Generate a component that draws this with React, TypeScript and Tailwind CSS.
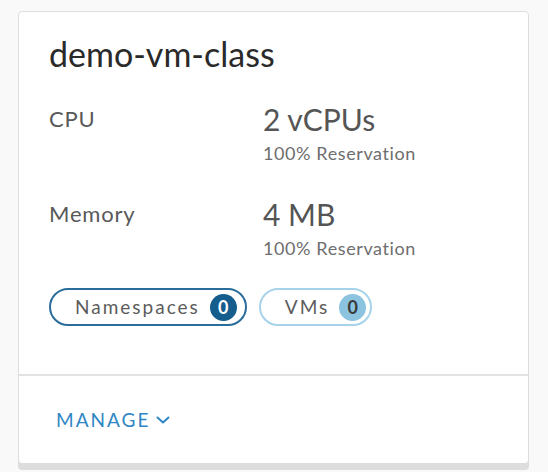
const font = { fontFamily: "Lato, 'Open Sans', sans-serif" };

function Stat({ label, value, note }: { label: string; value: string; note: string }) {
  return (
    <div className="flex">
      <div className="w-[214px] pt-[4px] text-[22px] leading-[28px] tracking-[0.8px] text-[#595959]">
        {label}
      </div>
      <div className="flex flex-col">
        <span className="text-[30px] leading-[36px] text-[#555555]">{value}</span>
        <span className="mt-[5px] text-[18px] leading-[22px] tracking-[0.6px] text-[#6e6e6e]">
          {note}
        </span>
      </div>
    </div>
  );
}

function Chip({ label, count, dark }: { label: string; count: number; dark?: boolean }) {
  return (
    <div
      className={`flex items-center h-[38px] rounded-full border-2 pl-[24px] gap-[10px] ${
        dark ? "border-[#2a6d9b] pr-[8px]" : "border-[#a6d3ea] pr-[4px]"
      }`}
    >
      <span className="text-[19px] tracking-[2px] text-[#5c5c5c]">{label}</span>
      <span
        className={`flex items-center justify-center w-[27px] h-[27px] rounded-full text-[18px] font-bold ${
          dark ? "bg-[#155d8d] text-white" : "bg-[#8cc3df] text-[#3a3a3a]"
        }`}
      >
        {count}
      </span>
    </div>
  );
}

export default function App() {
  return (
    <div className="min-h-[472px] bg-[#f9f9f9] pt-[11px] pl-[18px] pr-[19px]" style={font}>
      <div className="bg-white border border-[#dddddd] rounded-[4px] shadow-[0_6px_0_0_#dddddd]">
        <div className="px-[30px] pt-[22px] h-[362px]">
          <h1 className="text-[34px] leading-[40px] text-[#2a2a2a]">demo-vm-class</h1>
          <div className="mt-[27px] flex flex-col gap-[32px]">
            <Stat label="CPU" value="2 vCPUs" note="100% Reservation" />
            <Stat label="Memory" value="4 MB" note="100% Reservation" />
          </div>
          <div className="mt-[29px] flex gap-[12px]">
            <Chip label="Namespaces" count={0} dark />
            <Chip label="VMs" count={0} />
          </div>
        </div>
        <div className="border-t-2 border-[#e2e2e2] h-[89px] flex items-center px-[37px]">
          <button className="flex items-center gap-[5px] text-[19px] leading-[24px] tracking-[2px] text-[#2f86c4]">
            MANAGE
            <svg width="16" height="10" viewBox="0 0 16 10" fill="none">
              <path d="M2.5 2.5 L8 7.5 L13.5 2.5" stroke="#2f86c4" strokeWidth="2" strokeLinecap="round" strokeLinejoin="round" />
            </svg>
          </button>
        </div>
      </div>
    </div>
  );
}
